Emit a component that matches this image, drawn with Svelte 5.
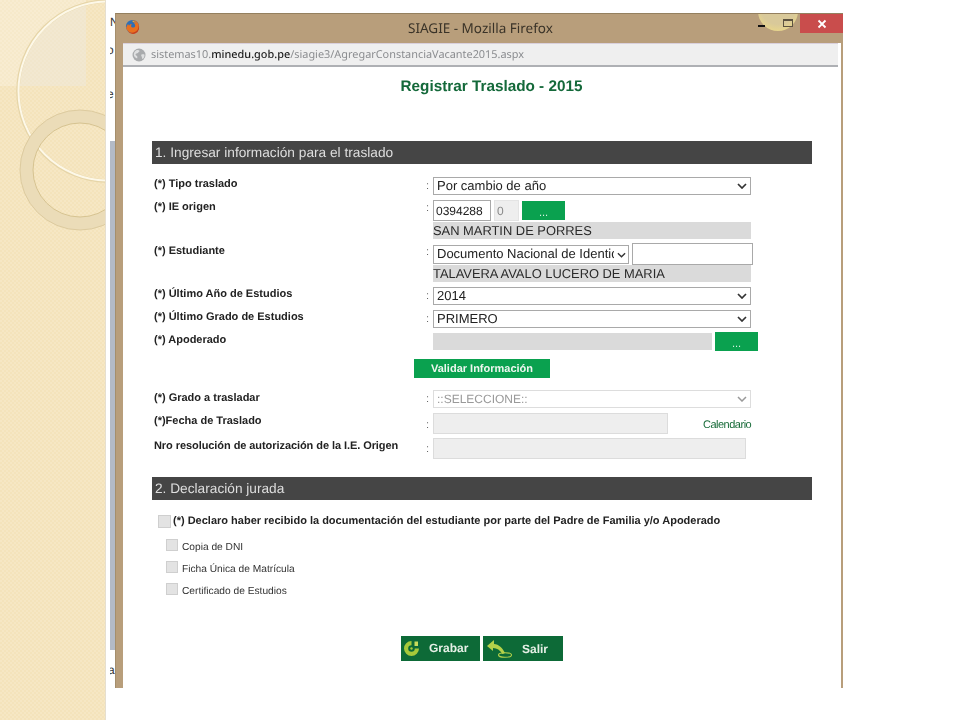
<script>
  const docs = ['Copia de DNI', 'Ficha Única de Matrícula', 'Certificado de Estudios'];
</script>

<div class="stage">
  <aside class="side">
    <svg width="106" height="720" viewBox="0 0 106 720" aria-hidden="true">
      <defs>
        <pattern id="dots" width="4" height="4" patternUnits="userSpaceOnUse">
          <rect width="4" height="4" fill="#f4e3bb"/>
          <rect width="2" height="2" fill="#f6e7c4"/>
          <rect x="2" y="2" width="2" height="2" fill="#f6e7c4"/>
        </pattern>
        <clipPath id="sq"><rect width="86" height="86"/></clipPath>
      </defs>
      <rect width="106" height="720" fill="url(#dots)"/>
      <rect width="86" height="86" fill="#fff" opacity=".22"/>
      <circle cx="108" cy="91" r="90" fill="#e9e2d0" opacity=".35" clip-path="url(#sq)"/>
      <circle cx="108" cy="91" r="90" fill="none" stroke="#e6d5a8" stroke-width="3.500"/>
      <circle cx="108" cy="91" r="89.500" fill="none" stroke="#fdf8e8" stroke-width="2"/>
      <circle cx="80" cy="170" r="53.500" fill="none" stroke="#ebdcb8" stroke-width="13"/>
      <circle cx="80" cy="170" r="60" fill="none" stroke="#ddcb9f" stroke-width="1"/>
      <circle cx="80" cy="170" r="47" fill="none" stroke="#d6c391" stroke-width="1"/>
      <rect x="105" width="1" height="720" fill="#e6dfcf"/>
    </svg>
  </aside>

  <main class="page">
    <div class="behind">
      <span class="scrap s1">N</span>
      <span class="scrap s2">o</span>
      <span class="scrap s3">e</span>
      <span class="scrap s4">a</span>
      <div class="gray"></div>
    </div>

    <section class="window">
      <header class="titlebar">
        <svg class="fox" width="15" height="15" viewBox="0 0 16 16" aria-hidden="true">
          <circle cx="8" cy="8" r="7" fill="#2f6fb5"/>
          <path d="M8 1a7 7 0 1 1-6.800 8.600C2 7 2.600 6 3.400 5.200c0 .9.400 1.400 1 1.700C5 5.600 6.400 5.300 7.500 5.700 6.600 6.500 6.200 7.300 6.700 8.200c.6 1 2.300 1.300 3.300.6 1-.7 1.200-2.300.3-3.500C9.700 4.300 9 3.800 8.200 3.500 9.600 3.300 11 3.700 12 4.700 11 2.800 9.600 1.700 8 1z" fill="#e8701f"/>
          <path d="M14.300 6.500A7 7 0 0 1 3.200 13.200 6.500 6.500 0 0 0 14.300 6.500z" fill="#c8401c"/>
          <path d="M8 1.500c1.500.4 3 1.500 3.800 3C10.800 3.500 9.500 3 8.200 3.300z" fill="#f6b32a"/>
        </svg>
        <span class="wtitle">SIAGIE - Mozilla Firefox</span>
        <div class="glow"></div>
        <span class="min"></span>
        <span class="max"></span>
        <span class="close">
          <svg width="10" height="10" viewBox="0 0 10 10" aria-hidden="true"><path d="M1.500 1.500l7 7M8.500 1.500l-7 7" stroke="#fff" stroke-width="1.800"/></svg>
        </span>
      </header>

      <div class="client">
        <div class="urlbar">
          <svg width="14" height="14" viewBox="0 0 14 14" aria-hidden="true">
            <circle cx="7" cy="7" r="6.500" fill="#a9abad"/>
            <path d="M4 2.500c1.500-.8 3-.5 3.500.3.300.8-.8 1-1.200 1.800-.4.900-1.800.5-2.600 1.400-.6.800.3 1.300 1 1.700.9.500.8 1.800.4 2.800C3.200 10 1.800 8.400 1.800 6.600 1.800 5 2.700 3.400 4 2.500zM9.500 6.500c1-.4 2.500-.4 3 .2.100 1.700-.6 3.300-1.800 4.300-.8-.4-.6-1.500-1-2.300-.3-.8-.9-1.800-.2-2.200z" fill="#dfe0e1"/>
          </svg>
          <span class="url">sistemas10.<b>minedu.gob.pe</b>/siagie3/AgregarConstanciaVacante2015.aspx</span>
        </div>

        <div class="content">
          <h1>Registrar Traslado - 2015</h1>

          <h2 class="bar first">1. Ingresar información para el traslado</h2>

          <div class="form">
            <div class="row mb5">
              <span class="lab">(*) Tipo traslado</span><span class="col">:</span>
              <div class="sel w318"><select><option>Por cambio de año</option></select><svg class="chev" width="10" height="6" viewBox="0 0 10 6"><path d="M1 1l4 4 4-4" fill="none" stroke="#333" stroke-width="1.700"/></svg></div>
            </div>

            <div class="row mb4">
              <span class="lab">(*) IE origen</span><span class="col up">:</span>
              <div class="stack">
                <div class="inline">
                  <input class="code" value="0394288" />
                  <input class="zero" value="0" disabled />
                  <button class="dots">...</button>
                </div>
                <div class="readonly">SAN MARTIN DE PORRES</div>
              </div>
            </div>

            <div class="row mb5">
              <span class="lab dn">(*) Estudiante</span><span class="col">:</span>
              <div class="stack">
                <div class="inline doc">
                  <div class="sel w196"><select><option>Documento Nacional de Identidad</option></select><svg class="chev small" width="9" height="6" viewBox="0 0 10 6"><path d="M1 1l4 4 4-4" fill="none" stroke="#333" stroke-width="1.500"/></svg></div>
                  <input class="dni" />
                </div>
                <div class="readonly r2">TALAVERA AVALO LUCERO DE MARIA</div>
              </div>
            </div>

            <div class="row mb5">
              <span class="lab">(*) Último Año de Estudios</span><span class="col">:</span>
              <div class="sel w318"><select><option>2014</option></select><svg class="chev" width="10" height="6" viewBox="0 0 10 6"><path d="M1 1l4 4 4-4" fill="none" stroke="#333" stroke-width="1.700"/></svg></div>
            </div>

            <div class="row mb4">
              <span class="lab">(*) Último Grado de Estudios</span><span class="col">:</span>
              <div class="sel w318"><select><option>PRIMERO</option></select><svg class="chev" width="10" height="6" viewBox="0 0 10 6"><path d="M1 1l4 4 4-4" fill="none" stroke="#333" stroke-width="1.700"/></svg></div>
            </div>

            <div class="row apod">
              <span class="lab dn">(*) Apoderado</span><span class="col"></span>
              <div class="inline">
                <div class="greybox"></div>
                <button class="dots d2">...</button>
              </div>
            </div>

            <div class="validar"><button>Validar Información</button></div>

            <div class="row mb5">
              <span class="lab dn">(*) Grado a trasladar</span><span class="col">:</span>
              <div class="sel w318 off"><select disabled><option>::SELECCIONE::</option></select><svg class="chev" width="10" height="6" viewBox="0 0 10 6"><path d="M1 1l4 4 4-4" fill="none" stroke="#999" stroke-width="1.500"/></svg></div>
            </div>

            <div class="row mb4">
              <span class="lab dn">(*)Fecha de Traslado</span><span class="col low">:</span>
              <div class="inline">
                <input class="fecha" disabled />
                <a class="cal" href="#cal">Calendario</a>
              </div>
            </div>

            <div class="row">
              <span class="lab dn nro-lab">Nro resolución de autorización de la I.E. Origen</span><span class="col low2">:</span>
              <input class="nro" disabled />
            </div>
          </div>

          <h2 class="bar second">2. Declaración jurada</h2>

          <div class="decl">
            <span class="check big"></span>
            <span class="dtext">(*) Declaro haber recibido la documentación del estudiante por parte del Padre de Familia y/o Apoderado</span>
          </div>

          <ul class="docs">
            {#each docs as d}
              <li><span class="check"></span><span>{d}</span></li>
            {/each}
          </ul>

          <div class="actions">
            <button class="act grabar">
              <svg width="17" height="17" viewBox="0 0 17 17" aria-hidden="true">
                <path d="M8.500 1a7.500 7.500 0 1 0 7.500 7.500h-4.200a3.300 3.300 0 1 1-3.300-3.300z" fill="#a6c93a"/>
                <circle cx="8.500" cy="8.500" r="1.200" fill="#a6c93a"/>
                <path d="M11.500 1.500h3.500v4.500h-3.500z" fill="#c7dc5c"/>
              </svg>
              <span>Grabar</span>
            </button>
            <button class="act salir">
              <svg width="26" height="18" viewBox="0 0 26 18" aria-hidden="true">
                <path d="M7 0L0 6l6 5V8c4 .2 7 2 9.500 6l2.500-1C15.500 8 12 4.300 7 4z" fill="#b5d24a"/>
                <ellipse cx="18" cy="15" rx="6.500" ry="2.300" fill="none" stroke="#b5d24a" stroke-width="1.100"/>
              </svg>
              <span>Salir</span>
            </button>
          </div>
        </div>
      </div>
    </section>
  </main>
</div>

<style>
  :global(body) { margin: 0; background: #fff; }
  * { box-sizing: border-box; }
  .stage { display: flex; width: 960px; height: 720px; overflow: hidden; font-family: "Liberation Sans", Arial, sans-serif; color: #222; text-rendering: geometricPrecision; }
  .side { width: 106px; flex: none; }
  .side svg { display: block; }
  .page { position: relative; flex: 1; background: #fff; }

  .behind { position: absolute; left: 4px; top: 0; width: 6px; height: 720px; overflow: hidden; }
  .gray { position: absolute; left: 0; top: 141px; width: 6px; height: 509px; background: #b3bac6; }
  .scrap { position: absolute; font-size: 12px; color: #333; line-height: 12px; }
  .s1 { top: 16px; left: 0; }
  .s2 { top: 44px; left: -3px; }
  .s3 { top: 88px; left: -3px; }
  .s4 { top: 664px; left: -2px; }

  .window { position: absolute; left: 9px; top: 13px; width: 728px; height: 675px; background: #b89e7b; border-top: 1px solid #94805f; border-left: 1px solid #a48e6c; display: flex; flex-direction: column; filter: blur(.3px); }
  .titlebar { position: relative; height: 29px; flex: none; overflow: hidden; }
  .fox { position: absolute; left: 9px; top: 5px; }
  .wtitle { position: absolute; left: 292px; top: 5px; font: 13.500px/18px "Noto Sans", "Open Sans", sans-serif; color: #3a3328; }
  .glow { position: absolute; left: 642px; top: -23px; width: 40px; height: 40px; border-radius: 50%; background: radial-gradient(circle at 50% 40%, #d9c99a 0 55%, #efdc84 90%, #f0dc80 100%); }
  .min { position: absolute; left: 642px; top: 11px; width: 7px; height: 2px; background: #111; }
  .max { position: absolute; left: 667px; top: 5px; width: 10px; height: 8px; border: 1px solid #5d5340; border-top-width: 2px; }
  .close { position: absolute; left: 684px; top: 0; width: 43px; height: 19px; background: #c94d4c; display: flex; align-items: center; justify-content: center; }

  .client { margin-left: 7px; margin-right: 2px; flex: 1; background: #fff; display: flex; flex-direction: column; }
  .urlbar { height: 24px; flex: none; background: #efefef; border-top: 1px solid #d9d0dc; border-bottom: 2px solid #aeb0b4; display: flex; align-items: center; padding-left: 9px; gap: 5px; margin-right: 3px; }
  .url { font: 10.900px/16px "Noto Sans", "Open Sans", sans-serif; color: #8b8d90; white-space: nowrap; }
  .url b { font-weight: 500; color: #1c1c1c; }

  .content { flex: 1; padding-left: 29px; background: #fff; }
  h1 { margin: 11px 0 0 0; width: 679px; text-align: center; font-size: 15.300px; line-height: 18px; font-weight: 700; color: #14693a; }
  .bar { margin: 0; width: 660px; height: 23px; background: #454545; color: #dedede; font-size: 13.700px; font-weight: 400; line-height: 23px; padding-left: 3px; }
  .first { margin-top: 45px; }
  .second { margin-top: 18px; }

  .form { margin-top: 13px; padding-left: 2px; }
  .row { display: grid; grid-template-columns: 272px 7px 1fr; align-items: start; }
  .mb5 { margin-bottom: 5px; }
  .mb4 { margin-bottom: 4px; }
  .lab { font-size: 11px; line-height: 14px; font-weight: 700; color: #222; white-space: nowrap; }
  .lab.dn { padding-top: 1px; }
  .nro-lab { letter-spacing: -.07px; }
  .col { font-size: 11px; line-height: 18px; height: 18px; color: #666; }
  .col.up { line-height: 16px; }
  .col.low { line-height: 24px; }
  .col.low2 { line-height: 22px; }

  .sel { position: relative; height: 18px; display: block; }
  .w318 { width: 318px; }
  .w196 { width: 196px; height: 19px; }
  .sel select { appearance: none; width: 100%; height: 100%; display: block; margin: 0; border: 1px solid #a9a9a9; border-radius: 0; background: #fff; font: 13px/16px "Liberation Sans", Arial, sans-serif; color: #222; padding: 0 18px 0 3px; opacity: 1; text-rendering: geometricPrecision; }
  .w196 select { padding-right: 14px; }
  .chev { position: absolute; right: 4px; top: 6px; pointer-events: none; }
  .chev.small { right: 3px; top: 7px; }
  .off select { border-color: #ddd; color: #999; background: #fff; font-size: 12px; }

  .stack { display: flex; flex-direction: column; }
  .inline { display: flex; align-items: flex-start; }
  input { margin: 0; border: 1px solid #a9a9a9; border-radius: 0; background: #fff; font: 12px "Liberation Sans", Arial, sans-serif; color: #222; outline: none; text-rendering: geometricPrecision; }
  .code { width: 58px; height: 21px; padding: 0 2px; }
  .zero { width: 25px; height: 21px; margin-left: 3px; padding: 0 2px; background: #eeeeee; border-color: #e4e4e4; color: #888; }
  .dots { margin-left: 3px; margin-top: 1px; width: 43px; height: 19px; border: none; background: #0aa14f; color: #d8f0e0; font: 11px/13px "Liberation Sans", Arial, sans-serif; padding: 4px 0 0; display: block; }
  .readonly { margin-top: 1px; width: 318px; height: 17px; background: #dadada; font-size: 12.900px; line-height: 17px; color: #2a2a2a; white-space: nowrap; }
  .doc { align-items: center; height: 22px; }
  .dni { width: 121px; height: 22px; margin-left: 3px; }
  .r2 { margin-top: 0; }

  .apod { margin-bottom: 8px; }
  .greybox { width: 279px; height: 17px; margin-top: 1px; background: #dadada; }
  .d2 { margin: 0 0 0 3px; }

  .validar { padding-left: 260px; margin-bottom: 12px; height: 19px; }
  .validar button { display: block; width: 136px; height: 19px; border: none; padding: 2px 0 0; background: #0aa14f; color: #eef7f0; font: 700 11px/17px "Liberation Sans", Arial, sans-serif; text-align: center; text-rendering: geometricPrecision; }

  .fecha { width: 235px; height: 21px; background: #eeeeee; border-color: #dcdcdc; }
  .cal { margin-left: 35px; margin-top: 6px; font-size: 11px; line-height: 13px; color: #1a6d3b; text-decoration: none; letter-spacing: -.5px; }
  .nro { width: 313px; height: 21px; background: #eeeeee; border-color: #dcdcdc; }

  .decl { display: flex; align-items: flex-start; margin-top: 13px; padding-left: 6px; height: 18px; }
  .check { display: block; flex: none; width: 12px; height: 12px; background: #e3e3e3; border: 1px solid #cfcfcf; }
  .check.big { width: 13px; height: 13px; margin-top: 2px; }
  .dtext { margin-left: 2px; padding-top: 1px; font-size: 11px; line-height: 14px; font-weight: 700; color: #222; white-space: nowrap; }

  .docs { list-style: none; margin: 8px 0 0; padding: 0 0 0 14px; }
  .docs li { display: flex; align-items: flex-start; height: 22px; font-size: 10.200px; line-height: 14px; color: #333; }
  .docs li span:last-child { margin-left: 4px; padding-top: 2px; }

  .actions { display: flex; gap: 3px; margin-top: 31px; padding-left: 249px; }
  .act { position: relative; display: flex; align-items: center; height: 25px; width: 80px; padding: 0; border: none; background: #0d6a37; color: #e6f0e6; font: 700 12px/14px "Liberation Sans", Arial, sans-serif; text-rendering: geometricPrecision; }
  .grabar { width: 79px; }
  .grabar svg { margin-left: 2px; }
  .grabar span { margin-left: 9px; margin-top: -2px; }
  .salir svg { margin-left: 4px; }
  .salir span { margin-left: 9px; }
</style>
